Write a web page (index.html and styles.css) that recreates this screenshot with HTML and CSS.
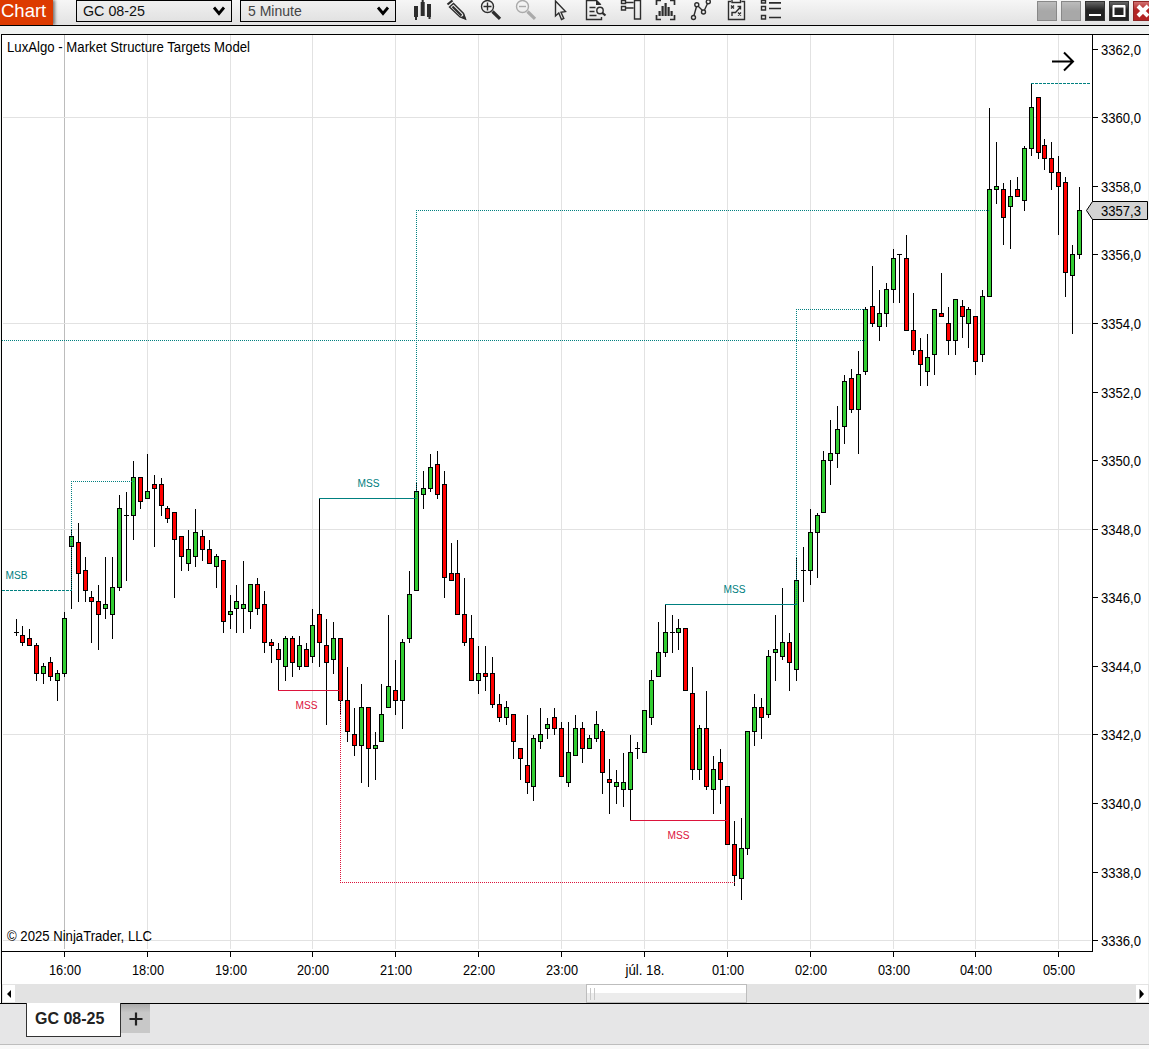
FILE: index.html
```html
<!DOCTYPE html>
<html lang="en">
<head>
<meta charset="UTF-8">
<meta name="viewport" content="width=device-width, initial-scale=1.0">
<title>Chart - GC 08-25</title>
<link rel="stylesheet" href="styles.css">
</head>
<body>

<div class="window">
    <div class="toolbar">
        <div class="logo">Chart</div>
        <div class="select instrument">
            <span>GC 08-25</span>
            <svg width="14" height="12"><path d="M2 2.5L7 8.5L12 2.5" /></svg>
        </div>
        <div class="select interval">
            <span>5 Minute</span>
            <svg width="14" height="12"><path d="M2 2.5L7 8.5L12 2.5" /></svg>
        </div>

        <div class="tools">
            <!-- bar style -->
            <svg class="tool" viewBox="0 0 35 25">
                <path class="solid" d="M9 6h4v11h-4zM15.7 2h4v14h-4zM22 4h4v13h-4zM10 15h2v5h-2zM16.7 0h2v3h-2zM23.5 15h2v4h-2z" />
            </svg>
            <!-- drawing tools -->
            <svg class="tool" viewBox="0 0 35 25">
                <path class="thick" d="M7.5 4.5L12.5 0.5" />
                <path d="M9.5 7L20 17L25.5 19L23.5 13.5L13.5 3.5z" />
                <path class="thick" d="M12.5 6.5L21.5 15.5" />
                <path class="solid" d="M21 17.5L26 19.8L24.5 14.5z" />
            </svg>
            <!-- zoom in -->
            <svg class="tool" viewBox="0 0 35 25">
                <circle cx="12.5" cy="6.5" r="6" />
                <path d="M8.5 6.5h8M12.5 2.5v8" />
                <path class="handle" d="M17.5 11.5L25 18.8" />
            </svg>
            <!-- zoom out -->
            <svg class="tool disabled" viewBox="0 0 35 25">
                <circle cx="12.5" cy="6.5" r="6" />
                <path d="M9 6.5h7" />
                <path class="handle" d="M17.5 11.5L25 18.8" />
            </svg>
            <!-- cursor -->
            <svg class="tool" viewBox="0 0 35 25">
                <path d="M10.5 1V16L13.8 13L16.5 19.5L18.8 18.5L16 12.2L20.5 11.5z" />
            </svg>
            <!-- data box -->
            <svg class="tool" viewBox="0 0 35 25">
                <path d="M21.5 17V19.5H6.5V0.5H16.5L20.5 4.5M9.5 7.5h6M9.5 11.5h5M9.5 15.5h7" />
                <path class="solid" d="M16 0L21.5 5H16z" />
                <circle cx="20" cy="10.5" r="3.2" />
                <path class="thick" d="M22.3 12.8L25.5 15.5" />
            </svg>
            <!-- chart trader -->
            <svg class="tool" viewBox="0 0 35 25">
                <path d="M6.5 0.5h4v3h-4zM6.5 6.5h4v3.5h-4zM10.5 2.5h8M10.5 8h8M19.5 0.5h6v18.5h-6z" />
            </svg>
            <!-- indicators -->
            <svg class="tool" viewBox="0 0 35 25">
                <path class="medium" d="M6.5 5V0.5H11M20 0.5h4.5V5M24.5 15v4.5H20M11 19.5H6.5V15" />
                <path class="solid" d="M8.5 11h2.2v5h-2.2zM11.5 6h2.2v10h-2.2zM14.5 3h2.2v13h-2.2zM17.5 7h2.2v9h-2.2zM20.5 11h2.2v5h-2.2z" />
            </svg>
            <!-- strategies -->
            <svg class="tool" viewBox="0 0 35 25">
                <path d="M9 15.5L11.5 6.5M13 6L17.5 10.5M19.5 10L22.5 3.5" />
                <circle cx="8.5" cy="17.5" r="2" />
                <circle cx="11.8" cy="4.7" r="2" />
                <circle cx="18.5" cy="12" r="2" />
                <circle cx="23.3" cy="1.7" r="2" />
            </svg>
            <!-- playbook -->
            <svg class="tool" viewBox="0 0 35 25">
                <path d="M11 1.5H8.5V19.5H24.5V1.5H21.5M12 0v2.5h8.5V0M11 5.5l3 3M14 5.5l-3 3M18 12.5l3 3M21 12.5l-3 3M12 16V12.5H15.5L20.5 7M17.5 6.5H20.5V9.5" />
            </svg>
            <!-- properties -->
            <svg class="tool" viewBox="0 0 35 25">
                <path d="M6.5 0.5h4v2.5h-4zM6.5 6.5h4v3.5h-4zM6.5 15.5h4v3.5h-4z" />
                <path class="medium" d="M14 2.8h12M14 8.5h12M14 17.5h12" />
            </svg>
        </div>

        <div class="window-buttons">
            <span class="btn blank"></span>
            <span class="btn blank"></span>
            <span class="btn dark"><svg viewBox="0 0 20 20"><path d="M4 14h12" /></svg></span>
            <span class="btn dark"><svg viewBox="0 0 20 20"><path d="M4.5 5.5h11v9.5h-11z" /><path d="M4 5h12" /></svg></span>
            <span class="btn close"><svg viewBox="0 0 20 20"><path d="M5 5L15 15M15 5L5 15" /></svg></span>
        </div>
    </div>

    <div class="chart">
        <svg id="plot" viewBox="0 34 1149 950" width="1149" height="950"></svg>
        <div class="scrollbar">
            <span class="scroll-btn"><svg width="12" height="17"><path d="M4 9L8 5V13z" /></svg></span>
            <div class="track"><div class="thumb"></div></div>
            <span class="scroll-btn"><svg width="12" height="17"><path d="M8 9L3.5 4V14z" /></svg></span>
        </div>
    </div>

    <div class="tabs">
        <div class="tab">GC 08-25</div>
        <div class="add-tab"><svg width="14" height="14"><path d="M0.5 7h13M7 0.5v13" /></svg></div>
    </div>
    <div class="footer"></div>
</div>

<script src="chart.js"></script>
</body>
</html>
```
FILE: styles.css
```css
body {
    margin: 0;
    background-color: #f8f8f8;
    font-family: "Liberation Sans", Arial, sans-serif;
    overflow: hidden;
}
.window {
    width: 1149px;
    height: 1049px;
    overflow: hidden;
    display: flex;
    flex-direction: column;
    background-color: #f0f2f1;
}

/* toolbar */
.toolbar {
    height: 25px;
    flex: none;
    display: flex;
    align-items: flex-start;
    border-bottom: 1px solid #000000;
    background: linear-gradient(#f6f6f6, #e2e2e2);
}
.logo {
    width: 53px;
    height: 25px;
    box-sizing: border-box;
    padding-left: 1px;
    margin-right: 23px;
    background-color: #dd3a00;
    color: #ffffff;
    font-size: 18.5px;
    line-height: 22px;
    box-shadow: 2px 0 3px rgba(0, 0, 0, 0.5);
    clip-path: inset(0 -6px 0 0);
}
.select {
    width: 156px;
    height: 22px;
    box-sizing: border-box;
    display: flex;
    justify-content: space-between;
    align-items: center;
    border: 1px solid #000000;
    background: linear-gradient(#f0f0f0, #e2e2e2);
    padding: 0 5px 0 6px;
    font-size: 14.3px;
    line-height: 20px;
    color: #111111;
}
.select svg path {
    fill: none;
    stroke: #000000;
    stroke-width: 2.8;
}
.interval {
    margin-left: 8px;
    padding-left: 7px;
    font-size: 14px;
    color: #444444;
}
.tools {
    display: flex;
    margin-left: 9px;
}
.tool {
    width: 35px;
    height: 25px;
    fill: none;
    stroke: #2d2d2d;
    stroke-width: 1.4;
}
.tool .solid {
    fill: #2d2d2d;
    stroke: none;
}
.tool .thick {
    stroke-width: 2.2;
}
.tool .medium {
    stroke-width: 1.7;
}
.tool .handle {
    stroke-width: 3.2;
}
.tool.disabled {
    stroke: #aaaaaa;
}
.window-buttons {
    display: flex;
    gap: 4px;
    margin: 1px -4px 0 auto;
}
.btn {
    width: 20px;
    height: 20px;
    box-sizing: border-box;
    border: 1px solid #888888;
    background: linear-gradient(#bcbcbc, #a8a8a8 50%);
}
.btn svg {
    display: block;
    width: 20px;
    height: 20px;
    margin: -1px;
    fill: none;
    stroke: #ffffff;
    stroke-width: 2;
}
.dark {
    border-color: #333333;
    background: linear-gradient(#666666, #222222 45%);
}
.close {
    border-color: #8d2626;
    background: linear-gradient(#d07070, #b32424 45%);
}
.close svg {
    stroke-width: 4;
}

/* chart panel */
.chart {
    margin-top: 8px;
    height: 970px;
    box-sizing: border-box;
    flex: none;
    background-color: #ffffff;
    border-bottom: 1px solid #000000;
}
#plot {
    display: block;
    font-size: 14px;
}
.edge {
    fill: #f0f2f1;
}
.grid {
    stroke: #e2e2e2;
}
.session {
    stroke: #bcbcbc;
}
.axis {
    stroke: #000000;
}
.wick {
    fill: #000000;
}
.up {
    fill: #32cd32;
    stroke: #000000;
}
.down {
    fill: #ff0000;
    stroke: #000000;
}
.bull {
    stroke: #008080;
}
.bear {
    stroke: #dc143c;
}
.dotted {
    stroke-dasharray: 1 1;
}
.dashed {
    stroke-dasharray: 3 1;
}
.label {
    font-size: 10px;
}
.bull-text {
    fill: #008080;
}
.bear-text {
    fill: #dc143c;
}
.price-tag {
    fill: #d3d3d3;
    stroke: #000000;
}
.arrow {
    fill: none;
    stroke: #000000;
    stroke-width: 2;
}

.scrollbar {
    height: 19px;
    box-sizing: border-box;
    display: flex;
    align-items: flex-start;
    margin-left: 1px;
    padding: 1px 1px 0 1px;
    border-left: 1px solid #000000;
    background-color: #e3e3e3;
}
.scroll-btn {
    height: 17px;
    background-color: #ffffff;
}
.scroll-btn svg {
    display: block;
}
.track {
    flex: 1;
    height: 18px;
    margin-top: -1px;
}
.thumb {
    width: 161px;
    height: 19px;
    box-sizing: border-box;
    margin-left: 571px;
    border: 1px solid #bdbdbd;
    background:
        linear-gradient(#c8c8c8, #c8c8c8) 3px 3px / 1px 12px no-repeat,
        linear-gradient(#c8c8c8, #c8c8c8) 7px 3px / 1px 12px no-repeat,
        linear-gradient(#ffffff 48%, #ececec 50%);
}

/* tabs */
.tabs {
    height: 40px;
    flex: none;
    display: flex;
    align-items: flex-start;
    padding-left: 26px;
    background-color: #e6e6e7;
    border-bottom: 1px solid #bdbdbd;
}
.tab {
    width: 95px;
    height: 34px;
    box-sizing: border-box;
    margin-top: -1px;
    border: 1px solid #333333;
    border-top: none;
    background-color: #ffffff;
    padding-left: 8px;
    font-size: 16px;
    font-weight: bold;
    line-height: 32px;
    color: #222222;
}
.add-tab {
    width: 29px;
    height: 29px;
    display: flex;
    align-items: center;
    justify-content: center;
    background: linear-gradient(#aaaaaa, #c8c8c8 30%);
}
.add-tab svg path {
    stroke: #222222;
    stroke-width: 2.2;
}
.footer {
    flex: 1;
    background-color: #f8f8f8;
}
```
FILE: chart.js
```js
// x, high, low, body top, body bottom, g = up / r = down / d = doji
const candles = [
    [16,619,636,632,633,'d'], [22,626,646,635,643,'r'], [29,629,646,638,646,'r'], [36,643,681,645,674,'r'],
    [43,663,684,666,674,'g'], [50,657,681,662,677,'r'], [57,670,701,673,681,'g'], [64,612,677,618,674,'g'],
    [71,530,609,536,547,'g'], [78,523,602,542,574,'r'], [85,557,602,570,591,'r'], [91,591,643,597,602,'r'],
    [98,585,650,601,615,'r'], [105,557,619,604,609,'g'], [112,557,639,587,615,'g'], [119,495,591,508,588,'g'],
    [126,492,581,515,516,'d'], [133,461,540,477,516,'g'], [140,477,509,477,502,'r'], [147,454,499,491,499,'g'],
    [154,475,547,484,489,'r'], [161,478,516,484,506,'r'], [167,506,523,508,519,'r'], [174,512,598,512,540,'r'],
    [181,536,571,536,557,'r'], [188,530,571,549,564,'g'], [195,509,567,532,557,'g'], [202,530,561,536,550,'r'],
    [209,540,564,549,564,'r'], [216,554,588,556,567,'g'], [223,560,633,560,622,'r'], [230,595,629,611,615,'g'],
    [236,585,633,601,609,'g'], [243,561,633,604,609,'g'], [250,584,629,584,612,'g'], [257,578,615,584,609,'r'],
    [264,591,653,604,643,'r'], [271,639,663,642,646,'r'], [278,643,690,649,660,'r'], [285,636,681,638,667,'g'],
    [292,636,677,638,663,'r'], [299,636,670,645,667,'g'], [306,643,667,649,667,'r'], [312,609,663,625,657,'g'],
    [319,499,667,614,643,'r'], [326,619,725,645,663,'r'], [333,622,674,638,660,'g'], [340,638,714,638,701,'r'],
    [347,667,742,700,732,'r'], [354,708,756,734,746,'r'], [361,684,783,707,746,'g'], [368,707,787,707,749,'r'],
    [375,732,780,745,749,'g'], [381,684,742,714,742,'g'], [388,615,708,686,708,'g'], [395,660,715,690,701,'r'],
    [402,639,729,642,701,'g'], [409,571,643,594,639,'g'], [416,483,591,491,591,'g'], [423,471,509,488,495,'g'],
    [430,454,492,467,489,'g'], [437,451,499,464,495,'r'], [444,471,598,484,578,'r'], [451,543,581,573,581,'r'],
    [457,540,615,573,615,'r'], [464,578,646,614,643,'r'], [471,615,681,638,681,'r'], [478,646,694,673,681,'g'],
    [485,646,691,673,677,'r'], [492,657,708,673,705,'r'], [499,694,722,704,718,'r'], [506,701,725,707,718,'g'],
    [513,714,759,714,742,'r'], [520,748,780,748,759,'r'], [527,715,794,765,783,'r'], [533,735,801,738,787,'g'],
    [540,708,749,734,742,'g'], [547,718,739,724,729,'g'], [554,708,735,717,729,'r'], [561,722,777,728,777,'r'],
    [568,722,787,752,783,'g'], [575,715,756,728,756,'g'], [582,722,763,728,749,'r'], [589,735,749,738,749,'g'],
    [596,711,742,724,739,'g'], [602,729,794,731,773,'r'], [609,759,814,779,783,'r'], [616,770,804,782,787,'g'],
    [623,753,807,782,790,'g'], [630,735,820,752,790,'g'], [637,742,759,748,749,'d'], [644,710,753,710,753,'g'],
    [651,670,725,680,718,'g'], [658,622,677,652,677,'g'], [665,605,657,632,653,'g'], [672,615,653,632,633,'d'],
    [678,619,650,628,633,'g'], [685,628,691,628,691,'r'], [692,667,780,693,770,'r'], [699,725,780,728,770,'g'],
    [706,691,790,728,787,'r'], [713,756,814,769,790,'g'], [720,749,804,762,780,'r'], [727,786,845,786,845,'r'],
    [734,821,886,844,876,'r'], [741,818,900,848,879,'g'], [747,731,855,731,849,'g'], [754,694,746,707,732,'g'],
    [761,698,739,707,718,'r'], [768,650,718,656,715,'g'], [775,615,681,649,653,'g'], [782,588,660,642,657,'g'],
    [789,633,691,642,663,'r'], [796,557,681,580,670,'g'], [803,547,602,570,571,'d'], [810,509,585,532,571,'g'],
    [817,513,578,515,533,'g'], [823,451,513,460,513,'g'], [830,420,485,453,461,'g'], [837,406,468,429,454,'g'],
    [844,375,444,381,427,'g'], [851,369,413,378,410,'r'], [858,351,454,374,410,'g'], [865,307,375,309,372,'g'],
    [872,266,327,306,324,'r'], [879,290,341,313,327,'g'], [886,283,327,289,314,'g'], [893,249,303,258,290,'g'],
    [899,254,303,254,255,'d'], [906,235,331,258,331,'r'], [913,293,355,330,351,'r'], [920,338,386,350,365,'r'],
    [927,334,386,357,372,'g'], [934,309,375,309,355,'g'], [941,273,317,313,317,'r'], [948,307,355,323,341,'r'],
    [955,299,355,299,341,'g'], [962,300,338,306,317,'r'], [968,307,348,309,324,'g'], [975,316,375,316,362,'r'],
    [982,290,362,296,355,'g'], [989,108,297,189,297,'g'], [996,142,204,186,190,'g'], [1003,183,245,189,218,'r'],
    [1010,180,249,196,207,'g'], [1017,177,197,189,197,'r'], [1024,146,211,148,201,'g'], [1031,84,156,107,149,'g'],
    [1038,97,159,97,153,'r'], [1044,139,170,145,159,'r'], [1051,142,190,158,173,'r'], [1058,156,235,172,187,'r'],
    [1065,177,297,182,273,'r'], [1072,245,334,254,276,'g'], [1079,187,259,210,255,'g']
];

const times = [
    [64,'16:00'], [147,'18:00'], [230,'19:00'], [312,'20:00'], [395,'21:00'], [478,'22:00'], [561,'23:00'],
    [644,'júl. 18.'], [727,'01:00'], [810,'02:00'], [893,'03:00'], [975,'04:00'], [1058,'05:00']
];

const priceRows = [49, 117, 186, 254, 323, 392, 460, 529, 597, 666, 734, 803, 872, 940];

// x1, y1, x2, y2, classes
const levels = [
    [71,481,134,481,'bull dotted'], [71,481,71,590,'bull dotted'], [2,590,72,590,'bull dashed'],
    [319,498,417,498,'bull'], [416,210,416,498,'bull dotted'], [416,210,989,210,'bull dotted'],
    [2,340,865,340,'bull dotted'], [796,309,866,309,'bull dotted'], [796,309,796,604,'bull dotted'],
    [665,604,797,604,'bull'], [1031,83,1090,83,'bull dashed'],
    [278,690,341,690,'bear'], [340,690,340,882,'bear dotted'], [340,882,735,882,'bear dotted'],
    [630,820,728,820,'bear']
];

const labels = [
    [5.5,579,'MSB','bull-text'], [357.5,487,'MSS','bull-text'], [723.5,593,'MSS','bull-text'],
    [295.5,709,'MSS','bear-text'], [667.5,839,'MSS','bear-text']
];

// one pixel line, kept on the pixel centre
function line(x1, y1, x2, y2, cls) {
    if (x1 === x2) {
        return `<line x1="${x1 + 0.5}" y1="${y1}" x2="${x1 + 0.5}" y2="${y2}" class="${cls}" />`;
    }
    return `<line x1="${x1}" y1="${y1 + 0.5}" x2="${x2}" y2="${y1 + 0.5}" class="${cls}" />`;
}

// text squeezed to a fixed width
function text(x, y, width, str, cls = '') {
    return `<text x="${x}" y="${y}" textLength="${width}" lengthAdjust="spacingAndGlyphs" class="${cls}">${str}</text>`;
}

let out = '<rect x="0" y="34" width="1" height="950" class="edge" />';
out += '<rect x="1148" y="35" width="1" height="949" class="edge" />';

// grid
times.forEach(([x], i) => out += line(x, 35, x, 949, i === 0 ? 'session' : 'grid'));
priceRows.forEach((y, i) => {
    if (i % 3 === 1) out += line(3, y, 1091, y, 'grid');
});

// axes
out += line(1, 34, 1149, 34, 'axis');
out += line(1, 34, 1, 984, 'axis');
out += line(1092, 35, 1092, 952, 'axis');
out += line(2, 951, 1093, 951, 'axis');
times.forEach(([x, t]) => {
    const width = t.includes(':') ? 32 : 39;
    out += line(x, 952, x, 957, 'axis');
    out += text(x + 1 - width / 2, 975, width, t);
});
priceRows.forEach((y, i) => {
    out += line(1093, y, 1098, y, 'axis');
    out += text(1101, y + 6, 40, `${3362 - i * 2},0`);
});

candles.forEach(([x, high, low, top, bottom, type]) => {
    out += `<rect x="${x}" y="${high}" width="1" height="${low - high}" class="wick" />`;
    if (type === 'd') {
        out += `<rect x="${x - 2}" y="${top}" width="5" height="1" class="wick" />`;
    } else {
        out += `<rect x="${x - 1.5}" y="${top + 0.5}" width="4" height="${bottom - top - 1}" class="${type === 'g' ? 'up' : 'down'}" />`;
    }
});

levels.forEach(l => out += line(...l));
labels.forEach(([x, y, t, cls]) => out += text(x, y, 22, t, 'label ' + cls));

out += '<path d="M1086.5 210.5L1092.5 201.5H1147.5V219.5H1092.5z" class="price-tag" />';
out += text(1101, 216, 40, '3357,3');
out += '<path d="M1052 61.5H1073M1064 52.5L1073 61.5L1064 70.5" class="arrow" />';
out += text(7, 52, 243, 'LuxAlgo - Market Structure Targets Model');
out += text(7, 941, 145, '© 2025 NinjaTrader, LLC');

document.getElementById('plot').innerHTML = out;
```
